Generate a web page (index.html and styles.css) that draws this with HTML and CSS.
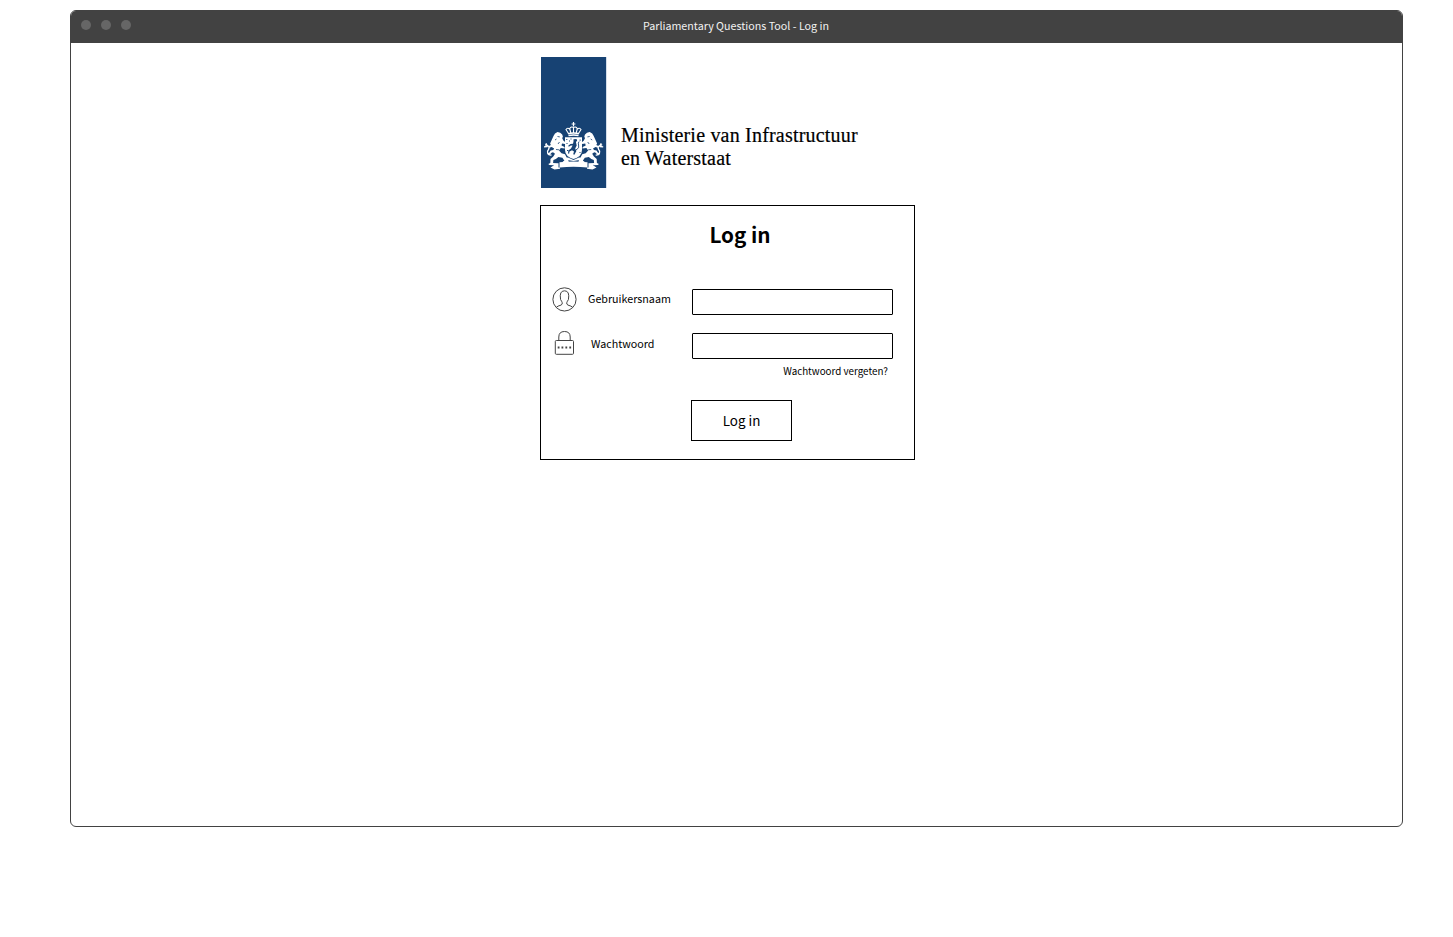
FILE: index.html
```html
<!DOCTYPE html>
<html lang="nl">
<head>
<meta charset="utf-8">
<title>Parliamentary Questions Tool - Log in</title>
<link rel="stylesheet" href="styles.css">
</head>
<body>
<div class="window">
  <header class="titlebar">
    <div class="dots"><span class="dot"></span><span class="dot"></span><span class="dot"></span></div>
    <span class="window-title">Parliamentary Questions Tool - Log in</span>
  </header>
  <main class="content">
    <div class="brand">
      <div class="flag">
        <svg class="crest" width="64" height="56" viewBox="0 0 64 56" fill="#fff">
          <!-- crown -->
          <path d="M30.900 4h1.200v1.400h1.300v1.100h-1.300v2h-1.200v-2h-1.300V5.400h1.300z"/>
          <g fill="none" stroke="#fff" stroke-width="1.100">
            <path d="M26.500 15.500L24 11.500Q25.500 9 28 11.500M36.500 15.500L39 11.500Q37.500 9 35 11.500M28.800 15L27.700 10.500Q29.500 8 31.500 9.500Q33.500 8 35.300 10.500L34.200 15M31.500 9V15"/>
            <path d="M26 15.800Q31.500 14.200 37 15.800M26.500 17.600Q31.500 16.200 36.500 17.600" stroke-width="1.500"/>
          </g>
          <!-- left supporter, mirrored for the right one -->
          <g id="lion">
            <path d="M11.500 18L13 15.500l2.500-1.400 2.700.6 2 1.800.7 2-.7 1.800 1.300 2.500 2 1.500-.5 1.700-3-.6-.5 2 3 1.500.3 1.700-4-.6-1.800 2.600 2.500 2.600 3.500 1 1.800 3.500 2 3.500-.8 1.500-4.500.2-.8-1.400 1.700-.7-2-3-4-.7-2.500 2-2.500.8-.3 3 1 1-.8 1.300-4-.1-1-1.200 2-1 .2-4 2.800-2.500 1.700-2.700-2-1.500-1.500.5-1.800 2.200-2-.3-.3-1.300 1.800-.6 1.500-2.200 2.500-.5 1-1.500-2.500-1.500-2.500.7-.8-1.500 2.500-1.200-.8-1.500z"/>
            <path d="M9.500 37C5.500 37.500 4.500 33.500 6.500 31.500C8 29.500 6.500 27 3 26.800M5.500 28.500L2 28.800M5 27.500L4 25.200" fill="none" stroke="#fff" stroke-width="1.300"/>
            <path d="M15.500 18.500l2.300.4M17.500 24l-1.500 2M14 31.500l3 .3M14.500 21l-1.500 1" fill="none" stroke="#174273" stroke-width=".8"/>
          </g>
          <use href="#lion" transform="matrix(-1 0 0 1 63.200 0)"/>
          <!-- shield with rampant lion -->
          <path d="M23 19.200H40V32Q40 38.500 31.500 41Q23 38.500 23 32z"/>
          <path d="M24.300 21h1v1h-1zM27 22.500h1v1h-1zM37.600 21.500h1v1.200h-1zM24.500 25h1v1h-1zM25 32h1.200v1H25zM37.500 34h1v1h-1zM28.500 20.500h1v1h-1z" fill="#174273"/>
          <path d="M31.500 21.200L34.500 21l.7 1.800-1.300 1.200.8 3.500-1.500 3 1.200 2.500-2 3.700-1.200-.5.800-2.800-2-1.200-2.500 1.300-.4 2.200-1-.3.2-3 2.700-1.800 1.600-3-1.800-.2-2 1.300-.6-1 2.200-1.700 2.600-.3.500-2.200z" fill="#174273"/>
          <path d="M34 32q4-2 2.600-5q-.8-2 .5-3.500" fill="none" stroke="#174273" stroke-width=".9"/>
          <path d="M22 40l4-.5 5.500 2.500 5.500-2.500 4 .5v1.500l-9.500 1.500-9.500-1.500z"/>
          <!-- ribbon -->
          <path d="M17.500 44.200Q31.500 43 45.500 44.200V49.600Q31.500 47.700 17.500 49.600z"/>
          <path d="M16.500 45.300l-6-.2 1.200 2.400-3.200 2 4 2 5.500-.7v-1.200h-1.500zM46.500 45.300l6-.2-1.200 2.400 3.200 2-4 2-5.500-.7v-1.200h1.500z"/>
        </svg>
      </div>
      <div class="ministry">Ministerie van Infrastructuur<br>en Waterstaat</div>
    </div>
    <form class="card">
      <h1 class="heading">Log in</h1>
      <div class="row">
        <svg class="icon" width="26" height="26" viewBox="0 0 26 26" fill="none" stroke="#444" stroke-width="1">
          <circle cx="13.500" cy="13.400" r="11.600"/>
          <path d="M5.200 21.400Q6.500 20 10 19.100Q11.700 18.400 11.200 16.600Q10.800 15.400 9.600 13.600Q8 4.800 13.500 4.800Q19 4.800 17.400 13.600Q16.200 15.400 15.800 16.600Q15.300 18.400 17 19.100Q20.500 20 21.800 21.400"/>
        </svg>
        <label class="label" for="user">Gebruikersnaam</label>
        <input class="field" id="user" type="text">
      </div>
      <div class="row">
        <svg class="icon" width="26" height="26" viewBox="0 0 26 26" fill="none" stroke="#444" stroke-width="1">
          <rect x="4.300" y="10.500" width="18.200" height="13.800" rx="1"/>
          <path d="M7.800 10.500V7Q7.800 1.500 13.500 1.500Q19.200 1.500 19.200 7V10.500"/>
          <path d="M6.700 17.500h1.800M10.500 17.500h1.800M14.400 17.500h1.800M18.300 17.500h1.800" stroke-width="1.800"/>
        </svg>
        <label class="label label-password" for="pass">Wachtwoord</label>
        <input class="field" id="pass" type="password">
      </div>
      <a class="forgot">Wachtwoord vergeten?</a>
      <button class="submit" type="button">Log in</button>
    </form>
  </main>
</div>
</body>
</html>
```
FILE: styles.css
```css
* { box-sizing: border-box; }
body {
  margin: 0;
  padding: 10px 50px 0 70px;
  background: #fff;
  color: #000;
  font-family: "Noto Sans CJK SC", "Noto Sans", sans-serif;
}
.window {
  height: 817px;
  border: 1px solid #424242;
  border-radius: 6px;
  overflow: hidden;
}
.titlebar {
  display: grid;
  grid-template-columns: 80px 1fr 81px;
  height: 32px;
  background: #424242;
}
.dots { display: flex; gap: 10px; padding: 9px 0 0 10.4px; }
.dot { width: 10px; height: 10px; border-radius: 50%; background: #666; }
.window-title {
  text-align: center;
  color: #f2f2f2;
  font-size: 10.72px;
  line-height: 29px;
}
.content { padding: 14px 0 0 469px; }
.brand { display: flex; padding-left: 1px; height: 148px; }
.flag { width: 65px; height: 131px; padding: 61px 0 0 1px; background: #174273; box-shadow: 1px 0 #d5deea; }
.crest { display: block; }
.ministry {
  padding: 67px 0 0 15px;
  font-family: "Liberation Serif", serif;
  font-size: 20px;
  line-height: 23px;
  letter-spacing: .2px;
  white-space: nowrap;
  -webkit-text-stroke: .2px #000;
}
.card {
  display: flex;
  flex-direction: column;
  width: 375px;
  height: 255px;
  border: 1px solid #000;
}
.heading {
  margin: 11px 0 38px 25px;
  height: 34px;
  text-align: center;
  font-size: 20.7px;
  line-height: 34px;
  font-weight: 700;
}
.row { display: flex; height: 26px; margin-bottom: 18px; padding-left: 10px; }
.icon { flex: none; margin-top: -3px; }
.label {
  width: 115px;
  padding-left: 11px;
  font-size: 10.72px;
  line-height: 19px;
}
.label-password { padding-left: 14px; line-height: 21px; }
.field {
  width: 201px;
  height: 26px;
  padding: 0 6px;
  border: 1px solid #000;
  border-radius: 1px;
  background: #fff;
  font: inherit;
}
.forgot {
  align-self: flex-end;
  height: 16px;
  margin: -14px 26px 21px 0;
  font-size: 9.82px;
  line-height: 16px;
}
.submit {
  width: 101px;
  height: 41px;
  margin: 0 0 0 150px;
  padding: 0 0 1px;
  border: 1px solid #000;
  background: #fff;
  color: #000;
  font-family: inherit;
  font-size: 13.4px;
}
```
